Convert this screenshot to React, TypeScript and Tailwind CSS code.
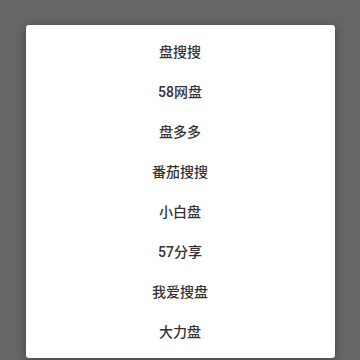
const SITES = ["盘搜搜", "58网盘", "盘多多", "番茄搜搜", "小白盘", "57分享", "我爱搜盘", "大力盘"];

export default function App() {
  return (
    <div className="h-[360px] w-[360px] overflow-hidden bg-[#666666] pt-[25px] font-['Roboto','Noto_Sans_CJK_SC',sans-serif]">
      <div className="mx-auto w-[309px] rounded-[3px] bg-white pt-[7px] pb-[6px] shadow-[0_2px_10px_rgba(0,0,0,0.35)]">
        {SITES.map((name) => (
          <div
            key={name}
            className="flex h-10 items-center justify-center text-[14px] font-medium text-[#333333]"
          >
            {name}
          </div>
        ))}
      </div>
    </div>
  );
}
